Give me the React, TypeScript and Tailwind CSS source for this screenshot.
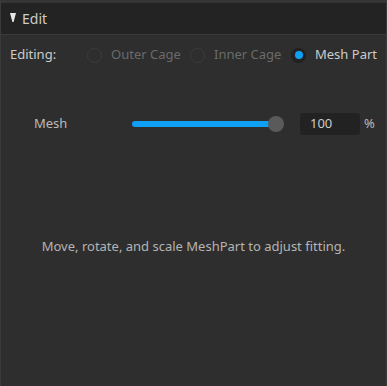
import React from "react";

function Radio({ checked }: { checked?: boolean }) {
  return (
    <span
      className={
        "flex items-center justify-center w-[15px] h-[15px] rounded-full border " +
        (checked ? "border-[#1e1e1e] bg-[#232323]" : "border-[#3c3c3c] bg-transparent")
      }
    >
      {checked && <span className="block w-[8px] h-[8px] rounded-full bg-[#0fa0f5]" />}
    </span>
  );
}

export default function App() {
  return (
    <div
      className="w-[387px] h-[386px] bg-[#2e2e2e] flex flex-col text-[13px] text-[#aaaaaa] border-x border-[#3a3a3a] overflow-hidden"
      style={{ fontFamily: "'Noto Sans', sans-serif" }}
    >
      <div className="h-[3px] bg-[#353535]" />
      <div className="h-[32px] bg-[#232323] border-b border-[#3a3a3a] flex items-center pl-[9px] gap-[6px] text-[#cccccc]">
        <svg width="6" height="9" viewBox="0 0 6 9" className="mt-[-2px]">
          <polygon points="0,0 6,0 3.6,9 2.4,9" fill="#e6e6e6" />
        </svg>
        <span className="text-[14px]">Edit</span>
      </div>
      <div className="h-[39px] pt-[1px] flex items-center pl-[9px]">
        <span className="w-[77px] text-[#cccccc]">Editing:</span>
        <label className="flex items-center gap-[9px] w-[103px]">
          <Radio />
          <span className="text-[#6a6a6a]">Outer Cage</span>
        </label>
        <label className="flex items-center gap-[9px] w-[101px]">
          <Radio />
          <span className="text-[#6a6a6a]">Inner Cage</span>
        </label>
        <label className="flex items-center gap-[9px]">
          <Radio checked />
          <span className="text-[#cccccc]">Mesh Part</span>
        </label>
      </div>
      <div className="mt-[30px] h-[40px] flex items-center pl-[33px]">
        <span className="w-[98px] text-[#bbbbbb]">Mesh</span>
        <div className="relative w-[152px] h-[16px] flex items-center">
          <div className="w-[144px] h-[6px] rounded-full bg-[#0fa0f5]" />
          <div className="absolute left-[136px] w-[16px] h-[16px] rounded-full bg-[#5a5a5a]" />
        </div>
        <div className="ml-[16px] w-[60px] h-[22px] rounded-[3px] bg-[#222222] flex items-center pl-[10px] text-[#cccccc]">
          100
        </div>
        <span className="ml-[4px] text-[#bbbbbb]">%</span>
      </div>
      <div className="mt-[93px] text-center text-[#b4b4b4]">
        Move, rotate, and scale MeshPart to adjust fitting.
      </div>
    </div>
  );
}
